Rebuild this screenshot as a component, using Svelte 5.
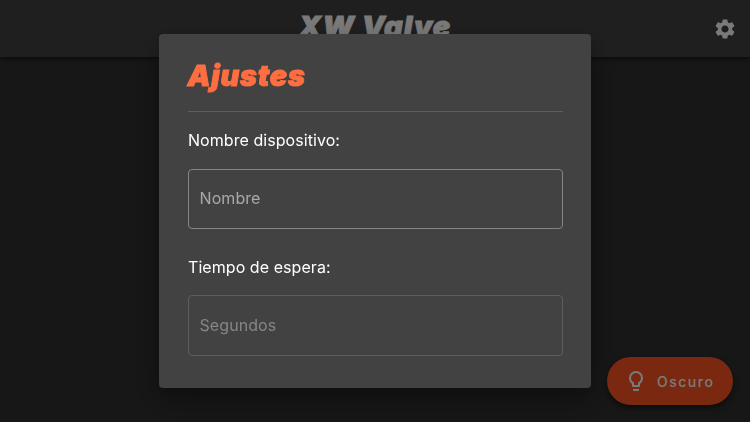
<script>
  let name = $state("");
  let seconds = $state("");
</script>

<div class="page">
  <header class="toolbar">
    <span></span>
    <h1 class="brand">XW Valve</h1>
    <button class="settings" aria-label="Ajustes">
      <svg width="24" height="24" viewBox="0 0 24 24" fill="currentColor">
        <path
          d="M19.14 12.94c.04-.3.06-.61.06-.94 0-.32-.02-.64-.07-.94l2.03-1.58c.18-.14.23-.41.12-.61l-1.92-3.32c-.12-.22-.37-.29-.59-.22l-2.39.96c-.5-.38-1.03-.7-1.62-.94l-.36-2.54c-.04-.24-.24-.41-.48-.41h-3.84c-.24 0-.43.17-.47.41l-.36 2.54c-.59.24-1.13.57-1.62.94l-2.39-.96c-.22-.08-.47 0-.59.22L2.74 8.87c-.12.21-.08.47.12.61l2.03 1.58c-.05.3-.09.63-.09.94s.02.64.07.94l-2.03 1.58c-.18.14-.23.41-.12.61l1.92 3.32c.12.22.37.29.59.22l2.39-.96c.5.38 1.03.7 1.62.94l.36 2.54c.05.24.24.41.48.41h3.84c.24 0 .44-.17.47-.41l.36-2.54c.59-.24 1.13-.56 1.62-.94l2.39.96c.22.08.47 0 .59-.22l1.92-3.32c.12-.22.07-.47-.12-.61l-2.01-1.58zM12 15.6c-1.98 0-3.6-1.62-3.6-3.6s1.62-3.6 3.6-3.6 3.6 1.62 3.6 3.6-1.62 3.6-3.6 3.6z"
        />
      </svg>
    </button>
  </header>

  <button class="theme-button">
    <svg width="24" height="24" viewBox="0 0 24 24" fill="currentColor">
      <path
        d="M12 2a7 7 0 0 1 7 7c0 2.38-1.19 4.47-3 5.74V17a1 1 0 0 1-1 1H9a1 1 0 0 1-1-1v-2.26C6.19 13.47 5 11.38 5 9a7 7 0 0 1 7-7M9 21v-1h6v1a1 1 0 0 1-1 1h-4a1 1 0 0 1-1-1m3-17a5 5 0 0 0-5 5c0 2.05 1.23 3.81 3 4.58V16h4v-2.42c1.77-.77 3-2.53 3-4.58a5 5 0 0 0-5-5z"
      />
    </svg>
    <span>Oscuro</span>
  </button>
</div>

<div class="backdrop">
  <div class="dialog" role="dialog" aria-labelledby="dialog-title">
    <h2 class="title" id="dialog-title">Ajustes</h2>
    <hr />
    <label for="name">Nombre dispositivo:</label>
    <input id="name" placeholder="Nombre" bind:value={name} />
    <label for="seconds">Tiempo de espera:</label>
    <input id="seconds" placeholder="Segundos" bind:value={seconds} disabled />
  </div>
</div>

<style>
  :global(body) {
    margin: 0;
    overflow: hidden;
    background: #303030;
    font-family: Inter, sans-serif;
  }

  .page {
    position: relative;
    height: 100vh;
    color: #fff;
  }

  .toolbar {
    display: grid;
    grid-template-columns: 48px 1fr 48px;
    align-items: center;
    height: 57px;
    background: #424242;
    box-shadow: 0 2px 4px rgba(0, 0, 0, 0.5);
  }

  .brand,
  .title {
    margin: 0;
    font-size: 29px;
    font-weight: 900;
    font-style: italic;
    line-height: 36px;
    letter-spacing: 0.7px;
    -webkit-text-stroke: 0.9px currentColor;
  }

  .brand {
    text-align: center;
    letter-spacing: 1.1px;
    padding-bottom: 4px;
  }

  button {
    border: 0;
    color: inherit;
    font: inherit;
  }

  .settings {
    display: flex;
    padding: 0 0 0 11px;
    background: none;
  }

  .theme-button {
    position: absolute;
    right: 17px;
    bottom: 17px;
    display: flex;
    align-items: center;
    gap: 9px;
    width: 126px;
    height: 48px;
    padding: 0 0 0 17px;
    border-radius: 24px;
    background: #ff5722;
    box-shadow: 0 3px 6px rgba(0, 0, 0, 0.5);
    font-size: 14px;
    font-weight: 450;
    letter-spacing: 1.5px;
  }

  .backdrop {
    position: fixed;
    inset: 0;
    display: flex;
    align-items: center;
    justify-content: center;
    background: rgba(0, 0, 0, 0.52);
  }

  .dialog {
    display: flex;
    flex-direction: column;
    box-sizing: border-box;
    width: 432px;
    height: 354px;
    padding: 24px 28.5px 0;
    border-radius: 4px;
    background: #424242;
    box-shadow: 0 10px 24px rgba(0, 0, 0, 0.4);
    color: #fff;
  }

  .title {
    color: #ff6e40;
  }

  hr {
    width: 100%;
    height: 1px;
    margin: 17px 0 18px;
    border: 0;
    background: #5e5e5e;
  }

  label {
    font-size: 16px;
    line-height: 20px;
    letter-spacing: 0.06px;
    padding-left: 0.5px;
  }

  input {
    box-sizing: border-box;
    height: 60px;
    margin: 19px 0 28px;
    padding: 0 11px 2px;
    border: 1px solid #858585;
    border-radius: 4px;
    background: none;
    color: #fff;
    font: inherit;
    font-size: 16px;
    letter-spacing: 0.08px;
  }

  label + input:disabled {
    margin-top: 18px;
    height: 61px;
  }

  input::placeholder {
    color: #a9a9a9;
    opacity: 1;
  }

  input:disabled {
    border-color: #5e5e5e;
  }

  input:disabled::placeholder {
    color: #868686;
  }
</style>
